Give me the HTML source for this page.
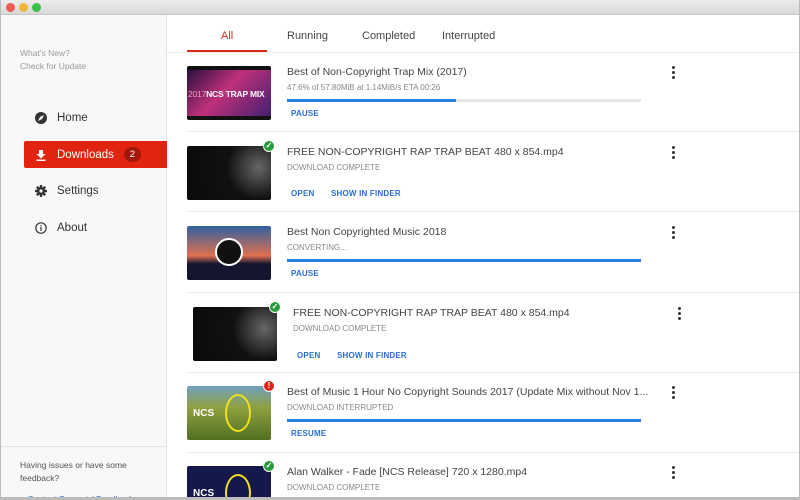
<!DOCTYPE html><html><head><style>
*{margin:0;padding:0;box-sizing:border-box}
html,body{width:800px;height:500px;overflow:hidden}
body{font-family:"Liberation Sans",sans-serif;background:#fff;position:relative}
#w{position:absolute;left:0;top:0;width:800px;height:500px;overflow:hidden}
.tb{position:absolute;left:0;top:0;width:800px;height:15px;background:linear-gradient(#ececec,#d8d8d8);border-bottom:1px solid #c8c8c8}
.dot{position:absolute;top:3px;width:9px;height:9px;border-radius:50%}
.side{position:absolute;left:0;top:15px;width:167px;height:485px;background:#f8f8f8;border-right:1px solid #e4e4e4}
.small{position:absolute;left:20px;font-size:8.5px;color:#999;line-height:13px}
.nav{position:absolute;left:24px;width:143px;height:27px;font-size:11.5px;color:#333;display:flex;align-items:center;padding-left:33px}
.nav svg{position:absolute;left:11px;top:8px}
.tab{position:absolute;top:30px;font-size:11px;color:#444}
.item{position:absolute;left:187px;width:603px}
.th{position:absolute;left:0;width:84px;height:54px;border-radius:2px;overflow:hidden}
.t1{position:absolute;left:100px;font-size:10.5px;color:#444;white-space:nowrap}
.t2{position:absolute;left:100px;font-size:8px;color:#888;white-space:nowrap}
.bar{position:absolute;left:100px;width:354px;height:3px;background:#e5e5e5}
.bar i{display:block;height:3px;background:#2a7de1}
.btn{position:absolute;font-size:8px;color:#2a6fd6;font-weight:bold;letter-spacing:.2px}
.more{position:absolute;left:485px;width:3px}
.more b{display:block;width:3px;height:3px;background:#333;border-radius:50%;margin-bottom:2px}
.sep{position:absolute;left:187px;width:613px;height:1px;background:#e8e8e8}
.badge{position:absolute;width:12px;height:12px;border-radius:50%;border:1.5px solid #fff;color:#fff;font-size:8px;text-align:center;line-height:9px;font-weight:bold}
</style></head><body><div id="w">
<div class="tb"><div class="dot" style="left:6px;background:#ee5b55"></div><div class="dot" style="left:19px;background:#f4b43b"></div><div class="dot" style="left:32px;background:#3cc146"></div></div>
<div class="side">
<div class="small" style="top:32px">What's New?<br>Check for Update</div>
<div class="nav" style="top:89px"><svg width="12" height="12"><circle cx="6" cy="6" r="6" fill="#333"/><path d="M3 9 L5 5 L9 3 L7 7Z" fill="#fff"/></svg>Home</div>
<div class="nav" style="top:126px;background:#e0240f;color:#fff;border-radius:2px 0 0 2px"><svg width="12" height="12"><path d="M4 1h4v4h2.5L6 9.5 1.5 5H4z" fill="#fff"/><rect x="1.5" y="10.5" width="9" height="1.5" fill="#fff"/></svg>Downloads<span style="margin-left:10px;background:#a3170b;border-radius:8px;width:17px;height:15px;display:inline-block;text-align:center;line-height:15px;font-size:9.5px">2</span></div>
<div class="nav" style="top:162px"><svg width="12" height="12" viewBox="0 0 12 12"><g fill="#333"><rect x="4.8" y="0" width="2.4" height="12" rx=".5"/><rect x="4.8" y="0" width="2.4" height="12" rx=".5" transform="rotate(45 6 6)"/><rect x="4.8" y="0" width="2.4" height="12" rx=".5" transform="rotate(90 6 6)"/><rect x="4.8" y="0" width="2.4" height="12" rx=".5" transform="rotate(135 6 6)"/><circle cx="6" cy="6" r="4"/></g><circle cx="6" cy="6" r="1.6" fill="#f8f8f8"/></svg>Settings</div>
<div class="nav" style="top:199px"><svg width="12" height="12"><circle cx="6" cy="6" r="5.2" fill="none" stroke="#333" stroke-width="1.2"/><rect x="5.4" y="5" width="1.2" height="4" fill="#333"/><rect x="5.4" y="3" width="1.2" height="1.2" fill="#333"/></svg>About</div>
<div style="position:absolute;left:0;top:431px;width:166px;height:1px;background:#e4e4e4"></div>
<div class="small" style="top:444px;font-size:8.5px;color:#555">Having issues or have some<br>feedback?</div>
<div class="small" style="top:478px;color:#2a6fd6">■ Contact Support / Feedback</div>
</div>
<div class="tab" style="left:221px;color:#d6281b">All</div>
<div style="position:absolute;left:187px;top:50px;width:80px;height:2px;background:#d6281b"></div>
<div class="tab" style="left:287px">Running</div>
<div class="tab" style="left:362px">Completed</div>
<div class="tab" style="left:442px">Interrupted</div>
<div style="position:absolute;left:167px;top:52px;width:633px;height:1px;background:#eee"></div>

<div class="item" style="top:66px"><div class="th" style="background:linear-gradient(135deg,#2a1040,#c0307a 45%,#402070);border-top:4px solid #111;border-bottom:4px solid #111"><span style="position:absolute;top:19px;left:1px;color:#fff;font-weight:bold;font-size:8.5px;white-space:nowrap;letter-spacing:-.2px"><span style="color:#e8a0c0;font-weight:normal">2017</span>NCS TRAP MIX</span></div>
<div class="t1" style="top:0">Best of Non-Copyright Trap Mix (2017)</div><div class="t2" style="top:17px">47.6% of 57.80MiB at 1.14MiB/s ETA 00:26</div>
<div class="bar" style="top:33px"><i style="width:169px"></i></div><div class="btn" style="left:104px;top:43px">PAUSE</div><div class="more" style="top:0"><b></b><b></b><b></b></div></div>
<div class="sep" style="top:131px"></div>

<div class="item" style="top:146px"><div class="th" style="background:radial-gradient(circle at 85% 40%,#666,#111 40%,#0a0a0a)"></div><div class="badge" style="left:76px;top:-6px;background:#279a3a">✓</div>
<div class="t1" style="top:0">FREE NON-COPYRIGHT RAP TRAP BEAT 480 x 854.mp4</div><div class="t2" style="top:17px">DOWNLOAD COMPLETE</div>
<div class="btn" style="left:104px;top:43px">OPEN</div><div class="btn" style="left:144px;top:43px">SHOW IN FINDER</div><div class="more" style="top:0"><b></b><b></b><b></b></div></div>
<div class="sep" style="top:211px"></div>

<div class="item" style="top:226px"><div class="th" style="background:linear-gradient(#3060a0,#e07050 55%,#151530 70%)"><div style="position:absolute;left:28px;top:12px;width:28px;height:28px;border-radius:50%;background:#111;border:2px solid #fff"></div></div>
<div class="t1" style="top:0">Best Non Copyrighted Music 2018</div><div class="t2" style="top:17px">CONVERTING...</div>
<div class="bar" style="top:33px"><i style="width:354px"></i></div><div class="btn" style="left:104px;top:43px">PAUSE</div><div class="more" style="top:0"><b></b><b></b><b></b></div></div>
<div class="sep" style="top:292px"></div>

<div class="item" style="top:307px;left:193px"><div class="th" style="background:radial-gradient(circle at 85% 40%,#666,#111 40%,#0a0a0a)"></div><div class="badge" style="left:76px;top:-6px;background:#279a3a">✓</div>
<div class="t1" style="top:0">FREE NON-COPYRIGHT RAP TRAP BEAT 480 x 854.mp4</div><div class="t2" style="top:17px">DOWNLOAD COMPLETE</div>
<div class="btn" style="left:104px;top:44px">OPEN</div><div class="btn" style="left:144px;top:44px">SHOW IN FINDER</div><div class="more" style="top:0"><b></b><b></b><b></b></div></div>
<div class="sep" style="top:372px"></div>

<div class="item" style="top:386px"><div class="th" style="background:linear-gradient(#70a0c0,#90a040 40%,#507020)"><div style="position:absolute;left:38px;top:8px;width:26px;height:38px;border-radius:50%;border:2px solid #f0e020"></div><span style="position:absolute;left:6px;top:22px;color:#fff;font-weight:bold;font-size:10px">NCS</span></div><div class="badge" style="left:76px;top:-6px;background:#e0241a">!</div>
<div class="t1" style="top:0">Best of Music 1 Hour No Copyright Sounds 2017 (Update Mix without Nov 1...</div><div class="t2" style="top:17px">DOWNLOAD INTERRUPTED</div>
<div class="bar" style="top:33px"><i style="width:354px"></i></div><div class="btn" style="left:104px;top:43px">RESUME</div><div class="more" style="top:0"><b></b><b></b><b></b></div></div>
<div class="sep" style="top:452px"></div>

<div class="item" style="top:466px"><div class="th" style="background:#14184a"><div style="position:absolute;left:38px;top:8px;width:26px;height:38px;border-radius:50%;border:2px solid #f0e020"></div><span style="position:absolute;left:6px;top:22px;color:#fff;font-weight:bold;font-size:10px">NCS</span></div><div class="badge" style="left:76px;top:-6px;background:#279a3a">✓</div>
<div class="t1" style="top:0">Alan Walker - Fade [NCS Release] 720 x 1280.mp4</div><div class="t2" style="top:17px">DOWNLOAD COMPLETE</div><div class="more" style="top:0"><b></b><b></b><b></b></div></div>
<div style="position:absolute;left:0;top:497px;width:800px;height:3px;background:#bbb"></div>
<div style="position:absolute;left:799px;top:0;width:1px;height:500px;background:#bbb"></div>
<div style="position:absolute;left:0;top:0;width:1px;height:500px;background:#bbb"></div>
</div></body></html>
